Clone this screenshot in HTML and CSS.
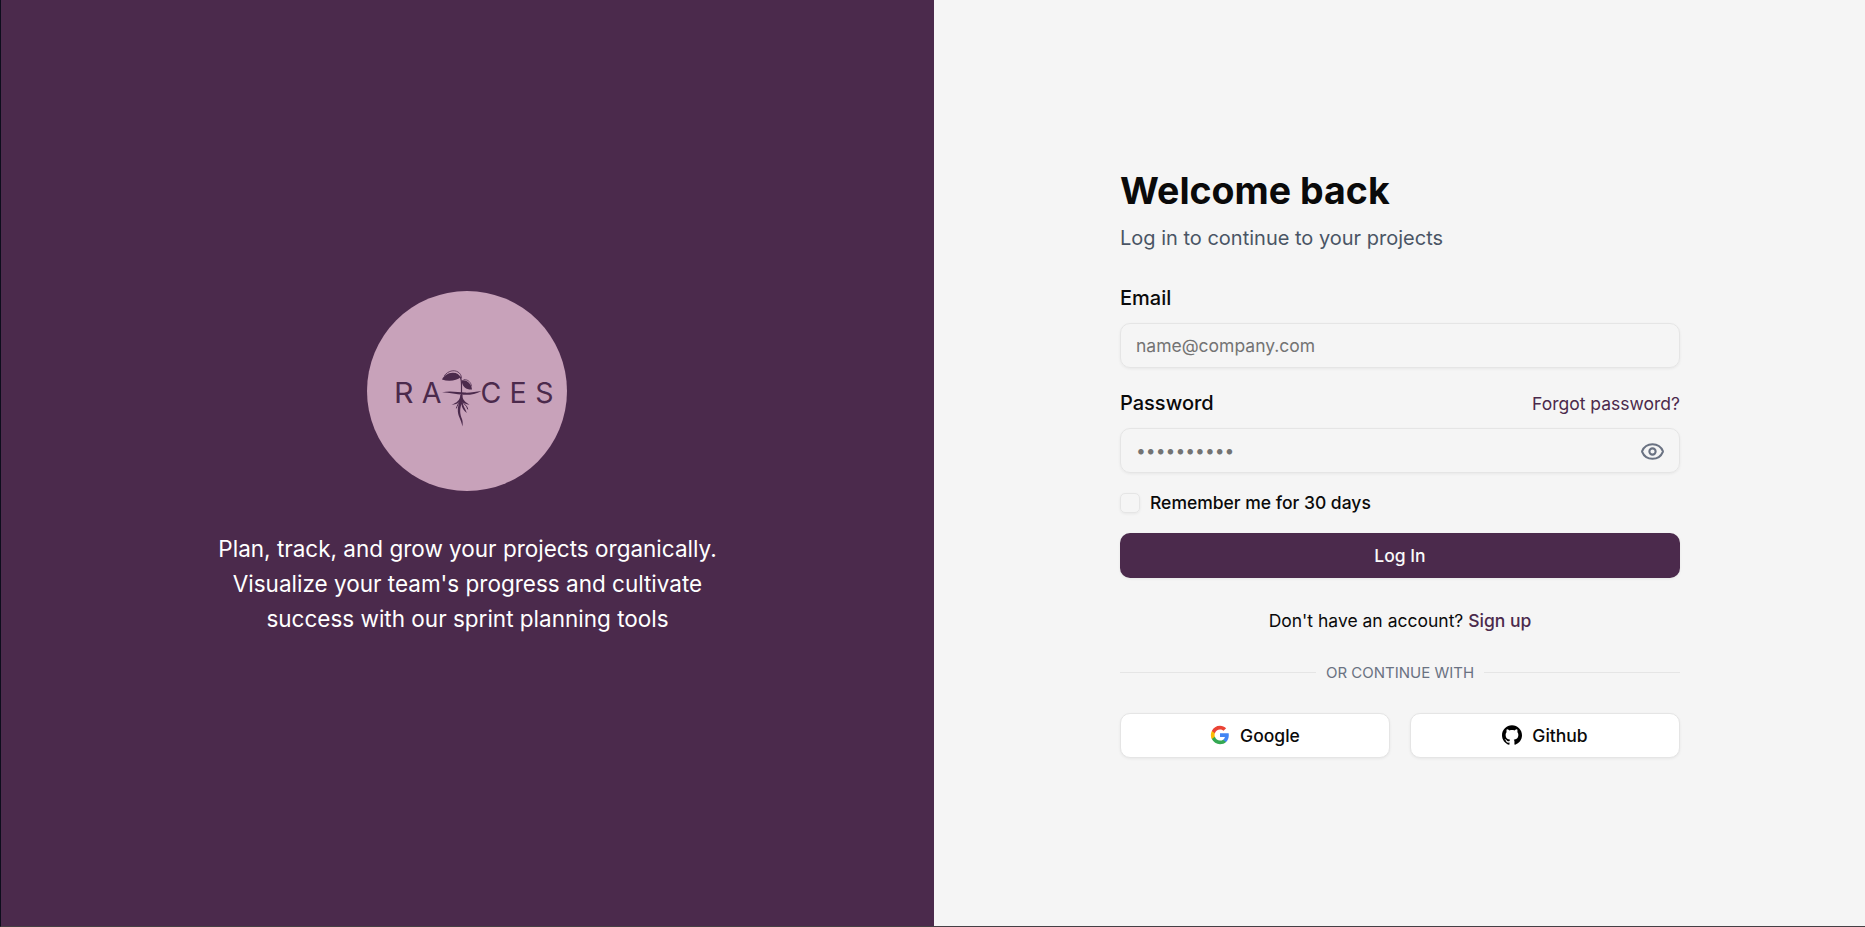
FILE: index.html
```html
<!DOCTYPE html>
<html lang="en">
<head>
<meta charset="utf-8">
<title>Raices - Log in</title>
<link rel="stylesheet" href="styles.css">
</head>
<body>
<div class="page">
  <section class="brand">
    <svg class="logo" viewBox="0 0 200 200" role="img" aria-label="Raices">
      <circle cx="100" cy="100" r="100" fill="#c8a2ba"/>
      <g class="logo-text">
        <text x="27" y="112" textLength="19.500" lengthAdjust="spacingAndGlyphs">R</text>
        <text x="54.800" y="112">A</text>
        <text x="113.600" y="112">C</text>
        <text x="142.400" y="112">E</text>
        <text x="168.200" y="112">S</text>
      </g>
      <g fill="#4b2a4c">
        <path d="M75 88.500C77 84.500 81 82 85.500 81.800C89.500 81.600 92.500 83.500 93.500 86.200C90 89.500 82 91 75 88.500Z"/>
        <path d="M94.500 89.500C99.500 88.500 104 92 105 98.500C99.500 98.800 95.500 96.500 94.500 89.500Z"/>
        <path d="M75 101.300C84 99.600 91 101.400 98 101.600C104 101.800 109 100.800 114.500 100C109 103 103 104.200 96 103.800C89 103.400 83 101.500 75 101.300Z"/>
        <path d="M93.300 104L95.500 104C95.300 108.500 97.500 110.500 102.500 113.800C98.500 113.200 96.500 112.200 95.800 111C96 115 98.200 117 99.800 122C96.500 119 94.900 117 94.400 113C92.500 119 93 123 95 128C95.800 130.500 95.800 132 95.500 135.500C94 128 90.500 125 90.800 118C91 115.500 91.800 113 92.300 111C90.500 112.800 88 113.800 84.500 113.800C90 111.500 93 109.500 93.300 104Z"/>
      </g>
      <g fill="none" stroke="#4b2a4c" stroke-linecap="round">
        <path stroke-width=".8" d="M77.500 84.500C81 79.800 87 78.500 91 81C93.200 82.500 94.300 84 94.500 87"/>
        <path stroke-width="1.200" d="M93 85.800C94.500 88 94.500 90 94.500 94V106"/>
        <path stroke-width=".7" d="M97 88.500C101.500 88.500 104 91.500 104.500 95"/>
        <path stroke-width="1" d="M96 111C97 114 100 114 100.700 118M92.500 111C91 113 90 115 89.500 117"/>
      </g>
    </svg>
    <p class="tagline">Plan, track, and grow your projects organically. Visualize your team's progress and cultivate success with our sprint planning tools</p>
  </section>
  <main class="panel">
    <form class="form">
      <h1 class="title">Welcome back</h1>
      <p class="subtitle">Log in to continue to your projects</p>
      <label class="label" for="email">Email</label>
      <input class="input" id="email" type="email" placeholder="name@company.com">
      <div class="label-row">
        <label class="label" for="password">Password</label>
        <a class="forgot">Forgot password?</a>
      </div>
      <div class="input password">
        <input class="bare-input" id="password" type="password" placeholder="••••••••••">
        <svg class="eye" viewBox="0 0 24 24" fill="none" stroke="currentColor" stroke-width="2" stroke-linecap="round" stroke-linejoin="round"><path d="M2.062 12.348a1 1 0 0 1 0-.696 10.750 10.750 0 0 1 19.876 0 1 1 0 0 1 0 .696 10.750 10.750 0 0 1-19.876 0"/><circle cx="12" cy="12" r="3"/></svg>
      </div>
      <div class="remember"><span class="checkbox"></span><span class="remember-text">Remember me for 30 days</span></div>
      <button class="submit" type="button">Log In</button>
      <p class="signup">Don't have an account? <a>Sign up</a></p>
      <div class="divider"><span>OR CONTINUE WITH</span></div>
      <div class="socials">
        <button class="social" type="button">
          <svg viewBox="0 0 24 24"><path fill="#4285F4" d="M22.560 12.250c0-.780-.070-1.530-.200-2.250H12v4.260h5.920c-.260 1.370-1.040 2.530-2.210 3.310v2.770h3.570c2.080-1.920 3.280-4.740 3.280-8.090z"/><path fill="#34A853" d="M12 23c2.970 0 5.460-.980 7.280-2.660l-3.570-2.770c-.980.660-2.230 1.060-3.710 1.060-2.860 0-5.290-1.930-6.160-4.530H2.180v2.840C3.990 20.530 7.700 23 12 23z"/><path fill="#FBBC05" d="M5.840 14.090c-.220-.660-.350-1.360-.350-2.090s.130-1.430.350-2.090V7.070H2.180C1.430 8.550 1 10.220 1 12s.430 3.450 1.180 4.930l3.660-2.840z"/><path fill="#EA4335" d="M12 5.380c1.620 0 3.060.560 4.210 1.640l3.150-3.150C17.450 2.090 14.970 1 12 1 7.700 1 3.990 3.470 2.180 7.070l3.660 2.840c.870-2.600 3.300-4.530 6.160-4.530z"/></svg>
          Google
        </button>
        <button class="social" type="button">
          <svg viewBox="0 0 24 24"><path d="M12 .297c-6.630 0-12 5.373-12 12 0 5.303 3.438 9.800 8.205 11.385.6.113.820-.258.820-.577 0-.285-.010-1.040-.015-2.040-3.338.724-4.042-1.610-4.042-1.610C4.422 18.070 3.633 17.700 3.633 17.700c-1.087-.744.084-.729.084-.729 1.205.084 1.838 1.236 1.838 1.236 1.070 1.835 2.809 1.305 3.495.998.108-.776.417-1.305.760-1.605-2.665-.300-5.466-1.332-5.466-5.930 0-1.310.465-2.380 1.235-3.220-.135-.303-.540-1.523.105-3.176 0 0 1.005-.322 3.300 1.230.960-.267 1.980-.399 3-.405 1.020.006 2.040.138 3 .405 2.280-1.552 3.285-1.230 3.285-1.230.645 1.653.240 2.873.120 3.176.765.840 1.230 1.910 1.230 3.220 0 4.610-2.805 5.625-5.475 5.920.420.360.810 1.096.810 2.220 0 1.606-.015 2.896-.015 3.286 0 .315.210.690.825.570C20.565 22.092 24 17.592 24 12.297c0-6.627-5.373-12-12-12"/></svg>
          Github
        </button>
      </div>
    </form>
  </main>
</div>
</body>
</html>
```

FILE: styles.css
```css
* { box-sizing: border-box; }
body {
  margin: 0;
  font-family: Inter, sans-serif;
  font-size: 17.5px;
  line-height: 25px;
  color: #0a0a0a;
}
h1, p { margin: 0; }
input, button { font: inherit; color: inherit; }
.page {
  display: grid;
  grid-template-columns: 933px 1fr;
  height: 927px;
  border-left: 1px solid #0d0d1c;
  border-bottom: 1px solid #454045;
  background: #f5f5f5;
}
.brand {
  display: flex;
  flex-direction: column;
  align-items: center;
  justify-content: center;
  gap: 40px;
  padding-right: 1px;
  background: #4b2a4c;
}
.logo { width: 200px; height: 200px; }
.logo-text {
  font-family: Inter, sans-serif;
  font-size: 28.500px;
  font-weight: 400;
  fill: #4b2a4c;
}
.tagline {
  width: 560px;
  padding: 0 19.5px 0 20.5px;
  font-size: 22.500px;
  line-height: 35px;
  text-align: center;
  color: #fff;
}
.panel {
  display: flex;
  align-items: center;
  justify-content: center;
  padding-left: 1px;
}
.form {
  display: flex;
  flex-direction: column;
  width: 560px;
}
.title {
  font-size: 37.500px;
  line-height: 45px;
  font-weight: 700;
}
.subtitle {
  margin: 10px 0 30px;
  font-size: 20px;
  line-height: 30px;
  color: #4a5565;
}
.label {
  font-size: 20px;
  line-height: 30px;
  font-weight: 500;
}
.label-row {
  display: flex;
  justify-content: space-between;
  align-items: center;
  margin-top: 20px;
}
.forgot { color: #4b2a4c; }
.input {
  width: 100%;
  height: 45px;
  margin-top: 10px;
  padding: 0 15px;
  border: 1px solid #e5e5e5;
  border-radius: 10px;
  background: transparent;
  box-shadow: 0 1px 3px rgb(0 0 0 / 6%);
}
.password {
  display: flex;
  align-items: center;
  padding-right: 14px;
}
.bare-input {
  flex: 1;
  min-width: 0;
  padding: 0;
  border: 0;
  background: transparent;
}
input::placeholder { color: #737373; opacity: 1; }
.eye { width: 25px; height: 25px; margin-top: 1px; color: #6a7282; }
.remember {
  display: flex;
  align-items: center;
  gap: 10px;
  height: 20px;
  margin: 20px 0;
  font-weight: 500;
}
.remember-text { padding-bottom: 2px; }
.checkbox {
  width: 20px;
  height: 20px;
  border: 1px solid #e5e5e5;
  border-radius: 5px;
  box-shadow: 0 1px 3px rgb(0 0 0 / 6%);
}
.submit {
  height: 45px;
  padding: 0;
  border: 0;
  border-radius: 10px;
  background: #4b2a4c;
  box-shadow: 0 1px 3px rgb(0 0 0 / 6%);
  color: #fafafa;
  font-weight: 500;
}
.signup { margin: 30px 0; text-align: center; }
.signup a { color: #4b2a4c; font-weight: 500; }
.divider {
  display: flex;
  align-items: center;
  gap: 10px;
  margin-bottom: 30px;
  font-size: 15px;
  line-height: 20px;
  color: #6a7282;
}
.divider::before, .divider::after {
  content: "";
  flex: 1;
  height: 1px;
  margin-bottom: 1px;
  background: #e5e5e5;
}
.socials {
  display: grid;
  grid-template-columns: 1fr 1fr;
  gap: 20px;
}
.social {
  display: flex;
  align-items: center;
  justify-content: center;
  gap: 10px;
  height: 45px;
  padding: 0;
  border: 1px solid #e5e5e5;
  border-radius: 10px;
  background: #fff;
  box-shadow: 0 1px 3px rgb(0 0 0 / 6%);
  font-weight: 500;
}
.social svg { width: 20px; height: 20px; margin-bottom: 1px; }
```
